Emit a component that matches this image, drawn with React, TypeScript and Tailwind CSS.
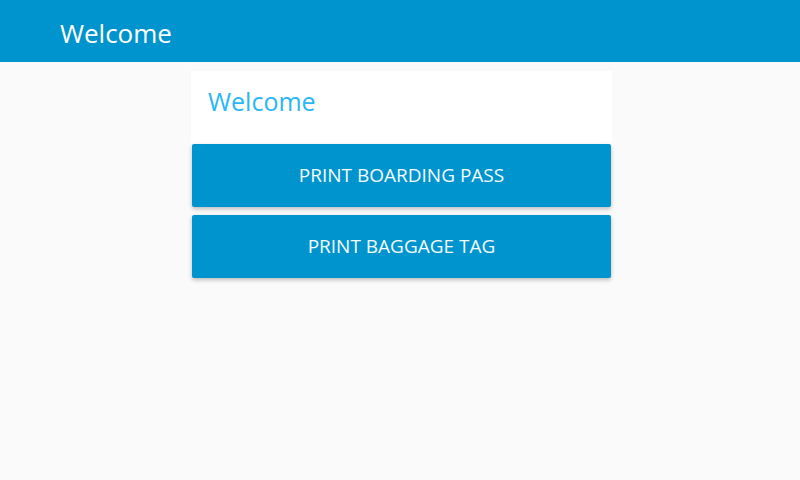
import React from "react";

export default function App() {
  return (
    <div className="w-[800px] h-[480px] bg-[#fafafa] flex flex-col" style={{ fontFamily: '"Open Sans", "Noto Sans", sans-serif' }}>
      <header className="h-[62px] bg-[#0094ce] flex items-center pl-[60px] pt-[3px] shrink-0">
        <h1 className="text-white text-[26px] font-normal leading-none">Welcome</h1>
      </header>
      <main className="flex pl-[191px] pt-[9px]">
        <div className="w-[421px] flex flex-col">
          <div className="bg-white h-[73px] flex items-center px-[17px] pb-[12px]">
            <h2 className="text-[#29b6f6] text-[25px] font-normal leading-none">Welcome</h2>
          </div>
          <div className="flex flex-col gap-[8px] px-[1px]">
            <button className="h-[63px] w-full bg-[#0094ce] text-[#f5fbff] text-[19px] leading-none uppercase rounded-[2px] shadow-[0_2px_4px_rgba(0,0,0,0.25)]">
              Print Boarding Pass
            </button>
            <button className="h-[63px] w-full bg-[#0094ce] text-[#f5fbff] text-[19px] leading-none uppercase rounded-[2px] shadow-[0_2px_4px_rgba(0,0,0,0.25)]">
              Print Baggage Tag
            </button>
          </div>
        </div>
      </main>
    </div>
  );
}
